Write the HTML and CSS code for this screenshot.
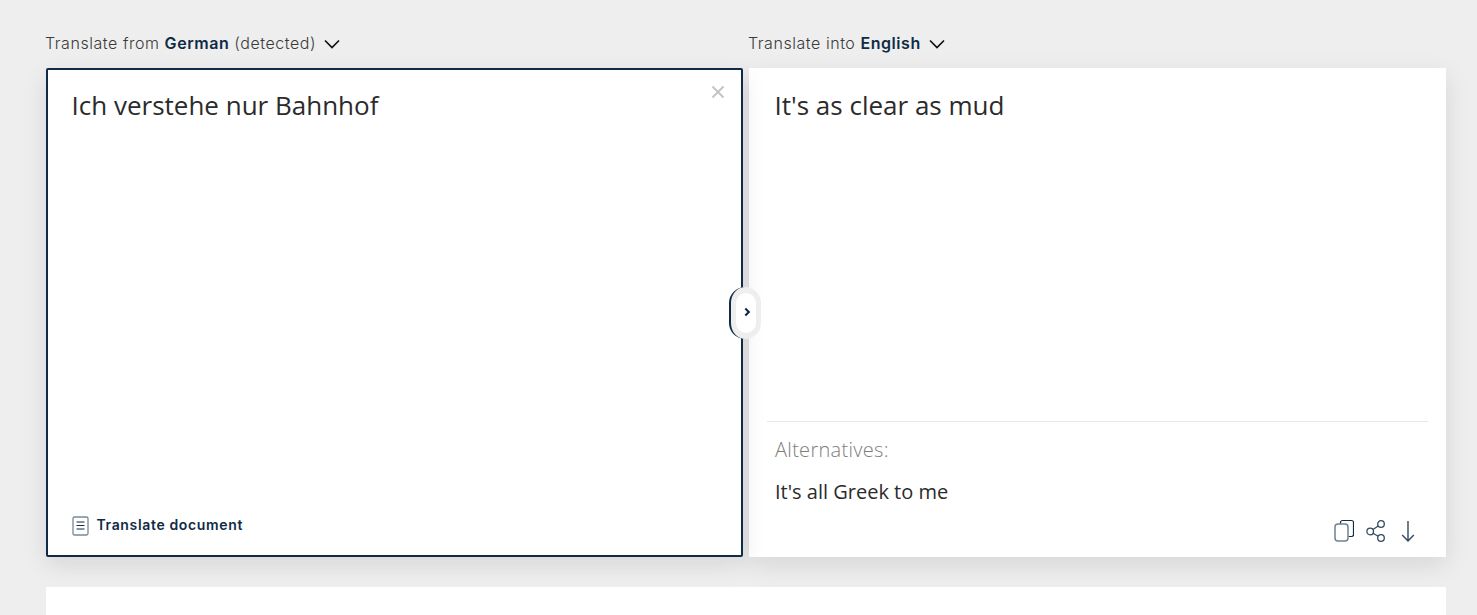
FILE: index.html
```html
<!DOCTYPE html>
<html lang="en">
<head>
<meta charset="utf-8">
<title>Translate</title>
<link rel="stylesheet" href="styles.css">
</head>
<body>
<main class="page">
  <section class="translator">
    <div class="column">
      <div class="label">
        <span class="label-text">Translate from <b>German</b> (detected)</span>
        <svg class="chevron" viewBox="0 0 16 10" width="16" height="10"><path d="M1 1.500 8 8.500 15 1.500" fill="none" stroke="#111" stroke-width="1.700"/></svg>
      </div>
      <div class="panel source">
        <div class="source-text">Ich verstehe nur Bahnhof</div>
        <svg class="clear" viewBox="0 0 14 14" width="14" height="14"><path d="M1.500 1.500 12.500 12.500M12.500 1.500 1.500 12.500" fill="none" stroke="#c4c4c4" stroke-width="2"/></svg>
        <div class="doc">
          <svg viewBox="0 0 17 20" width="17" height="20"><rect x="1" y="1" width="15" height="18" rx="1.500" fill="none" stroke="#76899b" stroke-width="1.300"/><path d="M4.500 6h8M4.500 9.500h8M4.500 13h8" fill="none" stroke="#0f2b46" stroke-width="1"/></svg>
          <span class="doc-text">Translate document</span>
        </div>
        <div class="toggle">
          <div class="toggle-inner">
            <svg viewBox="0 0 8 10" width="7" height="10"><path d="M1.500 1 5.500 5 1.500 9" fill="none" stroke="#0f2b46" stroke-width="2.400"/></svg>
          </div>
        </div>
      </div>
    </div>
    <div class="column">
      <div class="label">
        <span class="label-text">Translate into <b>English</b></span>
        <svg class="chevron" viewBox="0 0 16 10" width="16" height="10"><path d="M1 1.500 8 8.500 15 1.500" fill="none" stroke="#111" stroke-width="1.700"/></svg>
      </div>
      <div class="panel target">
        <div class="target-main">It's as clear as mud</div>
        <div class="alts">
          <div class="alts-title">Alternatives:</div>
          <div class="alts-item">It's all Greek to me</div>
          <div class="actions">
            <svg viewBox="0 0 20 23" width="20" height="23"><path d="M6.500 5V3.500a2 2 0 0 1 2-2h9a2 2 0 0 1 2 2V15.500a2 2 0 0 1-2 2h-3" fill="none" stroke="#0f2b46" stroke-width="1.200"/><rect x="1" y="5" width="13" height="17" rx="3" fill="none" stroke="#6f8294" stroke-width="1.500"/></svg>
            <svg viewBox="0 0 20 22" width="20" height="22"><circle cx="15" cy="4" r="3.300" fill="none" stroke="#33495e" stroke-width="1.300"/><circle cx="4.200" cy="11.500" r="3.300" fill="none" stroke="#33495e" stroke-width="1.300"/><circle cx="15" cy="18" r="3.300" fill="none" stroke="#33495e" stroke-width="1.300"/><path d="M7 9.600 12.200 6M7 13.300 12.200 16.300" fill="none" stroke="#33495e" stroke-width="1.200"/></svg>
            <svg class="action-down" viewBox="0 0 14 22" width="14" height="22"><path d="M7 1V21M1.200 15 7 21 12.800 15" fill="none" stroke="#33495e" stroke-width="1.400"/></svg>
          </div>
        </div>
      </div>
    </div>
  </section>
  <section class="next-card"></section>
</main>
</body>
</html>
```

FILE: styles.css
```css
* { box-sizing: border-box; }
html, body { margin: 0; height: 100%; overflow: hidden; }
body { background: #eeeeee; font-family: "Open Sans", sans-serif; color: #2b2b2b; }
.page { padding: 0 31px 0 46px; }
.translator { display: flex; gap: 6px; }
.column { flex: 1 1 0; min-width: 0; display: flex; flex-direction: column; }
.label {
  height: 68px; padding-top: 33px; display: flex; align-items: flex-start; gap: 8px;
  font-family: Inter, sans-serif; font-size: 16px; letter-spacing: .55px; line-height: 20px; font-weight: 300; color: #3a3a3a;
}
.label-text { margin-left: -1px; }
.label b { font-weight: 600; color: #0f2b46; }
.chevron { margin-top: 6px; }
.panel { position: relative; height: 489px; background: #fff; box-shadow: 0 8px 24px rgba(0,0,0,.1); }
.source { z-index: 1; border: 2px solid #0f2b46; border-radius: 2px; padding: 17px 24px 19px 23.5px; display: flex; flex-direction: column; justify-content: space-between; }
.source-text, .target-main { font-size: 26px; line-height: 36px; }
.clear { position: absolute; top: 15px; right: 16px; }
.doc { display: flex; align-items: center; gap: 8px; margin-bottom: 0; font-family: Inter, sans-serif; font-size: 14px; letter-spacing: .65px; font-weight: 600; color: #0f2b46; }
.doc-text { margin-top: -3px; }
.toggle {
  position: absolute; top: 217px; right: -20px; width: 32px; height: 52px;
  background: #eeeeee; border-radius: 16px; border-left: 2px solid #0f2b46;
  padding: 6px 5px 6px 5px; display: flex;
}
.toggle-inner {
  flex: 1; background: #fff; border-radius: 10px; padding: 0 0 2px 2px;
  display: flex; align-items: center; justify-content: center;
}
.target { display: flex; flex-direction: column; }
.target-main { flex: 1; padding: 19px 25.5px; }
.alts { margin: 0 18px; height: 136px; border-top: 1px solid #e8e8e8; padding: 13px 8px 0; position: relative; }
.alts-title { font-size: 20px; letter-spacing: .3px; line-height: 29px; font-weight: 300; color: #7d7d7d; }
.alts-item { margin-top: 14px; font-size: 20px; line-height: 28px; color: #2b2b2b; }
.actions { display: flex; gap: 12px; align-items: center; justify-content: flex-end; padding-right: 5px; margin-top: 13px; }
.action-down { margin-left: 3px; }
.next-card { position: relative; margin-top: 30px; height: 40px; background: #fff; }
```
